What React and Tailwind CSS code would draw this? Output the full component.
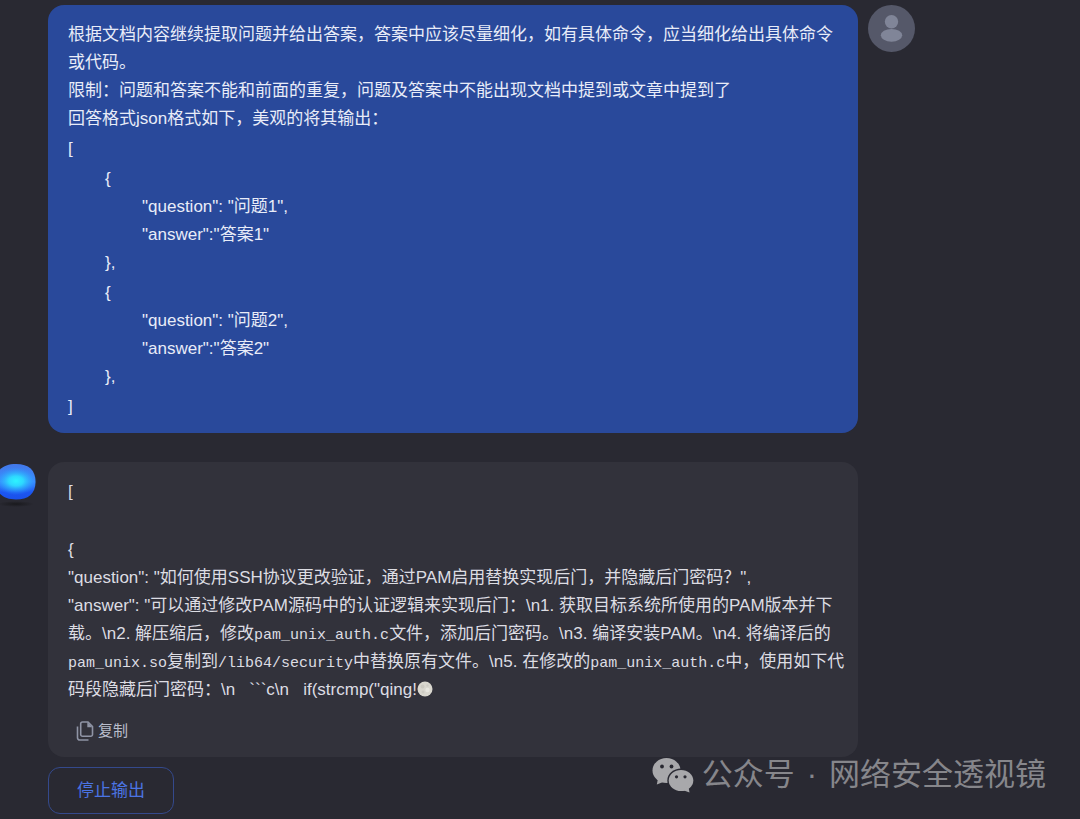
import React from 'react';

const Avatar = () => (
  <svg className="w-[47px] h-[47px] shrink-0" viewBox="0 0 47 47" role="img" aria-label="用户">
    <circle cx="23.5" cy="23.5" r="23.5" fill="#555869" />
    <circle cx="23.5" cy="16.8" r="6.7" fill="#808598" />
    <ellipse cx="23.5" cy="30.3" rx="10.7" ry="6.4" fill="#808598" />
  </svg>
);

const Bot = () => (
  <svg className="w-12 h-12 shrink-0" viewBox="0 0 48 48" role="img" aria-label="助手">
    <defs>
      <linearGradient id="body" x1="0" y1="0" x2="0" y2="1">
        <stop offset="0" stopColor="#4277e8" />
        <stop offset="0.5" stopColor="#3b8cff" />
        <stop offset="0.8" stopColor="#1c56f0" />
        <stop offset="1" stopColor="#1a50ea" />
      </linearGradient>
      <radialGradient id="glow" cx="0.5" cy="0.5" r="0.5">
        <stop offset="0" stopColor="#2df4ff" />
        <stop offset="0.35" stopColor="#2ce0ff" stopOpacity="0.9" />
        <stop offset="0.7" stopColor="#2cb0ff" stopOpacity="0.5" />
        <stop offset="1" stopColor="#2d8cff" stopOpacity="0" />
      </radialGradient>
      <radialGradient id="shade" cx="0.5" cy="0.5" r="0.5">
        <stop offset="0" stopColor="#19191d" />
        <stop offset="1" stopColor="#19191d" stopOpacity="0" />
      </radialGradient>
    </defs>
    <ellipse cx="16" cy="42" rx="18" ry="3" fill="url(#shade)" />
    <path
      d="M16 2C29 2 35.5 8 35.5 20S28 37.5 16 37.5-4 32-4 20 3 2 16 2Z"
      fill="url(#body)"
    />
    <ellipse cx="16" cy="19" rx="21" ry="14" fill="url(#glow)" />
  </svg>
);

const Moon = () => (
  <svg className="inline-block w-4 h-4 align-[-2px]" viewBox="0 0 16 16" aria-hidden="true">
    <circle cx="8" cy="8" r="7.5" fill="#d9d7cf" />
    <circle cx="5.5" cy="5.5" r="2" fill="#cbc9c1" />
    <circle cx="10.5" cy="9" r="2.2" fill="#e8e7e0" />
    <circle cx="6" cy="11" r="1.5" fill="#cdcbc3" />
    <circle cx="10.5" cy="4.5" r="1.2" fill="#cdcbc4" />
  </svg>
);

const CopyIcon = () => (
  <svg className="w-5 h-5" viewBox="0 0 20 20" fill="none" stroke="#8f94a5" strokeWidth="1.6" aria-hidden="true">
    <path d="M6.5 1H12l4.5 4.5V13.5a1.8 1.8 0 0 1-1.8 1.8H6.5a1.8 1.8 0 0 1-1.8-1.8V2.8A1.8 1.8 0 0 1 6.5 1Z" />
    <path d="M11.3 1v5.2h5.2Z" fill="#8f94a5" stroke="none" />
    <path d="M1.5 5.5V16.8a2.2 2.2 0 0 0 2.2 2.2H12.5" />
  </svg>
);

const WechatIcon = () => (
  <svg className="w-[42px] h-9 shrink-0" viewBox="0 0 42 36" aria-hidden="true">
    <g fill="#a8a8ab">
      <ellipse cx="14.5" cy="13.5" rx="14" ry="12.5" />
      <path d="M6 21.500 4.800 27.500 12.500 24.500Z" />
    </g>
    <ellipse cx="29" cy="23.500" rx="13.700" ry="12" fill="#292932" />
    <g fill="#a8a8ab">
      <ellipse cx="29" cy="23.500" rx="12.300" ry="10.600" />
      <path d="M30.500 33 37.500 35.500 36.500 30Z" />
    </g>
    <g fill="#292932">
      <circle cx="10" cy="9.500" r="1.900" />
      <circle cx="19.500" cy="9.500" r="1.900" />
      <circle cx="24.500" cy="19.800" r="1.600" />
      <circle cx="33" cy="19.800" r="1.600" />
    </g>
  </svg>
);

const Code = ({ children }) => (
  <code className="font-['Liberation_Mono',monospace] text-[15px] leading-none">{children}</code>
);

const Item = ({ n }) => (
  <div className="pl-[37px]">
    <p>{'{'}</p>
    <p className="pl-[37px]">"question": "问题{n}",</p>
    <p className="pl-[37px]">"answer":"答案{n}"</p>
    <p>{'},'}</p>
  </div>
);

export default () => {
  return (
    <div className="relative min-h-screen overflow-hidden bg-[#292932] font-['Liberation_Sans','Noto_Sans_CJK_SC',sans-serif] text-[17px] leading-7">
      <main className="w-full max-w-[915px] pt-[5px]">
        <div className="flex items-start pl-12">
          <div className="flex flex-col flex-1 gap-0.5 pt-4 pb-3 pl-5 pr-3 mr-2.5 rounded-2xl bg-[#29499b] text-[#e8ecf8]">
            <div>
              <p>根据文档内容继续提取问题并给出答案，答案中应该尽量细化，如有具体命令，应当细化给出具体命令或代码。</p>
              <p>限制：问题和答案不能和前面的重复，问题及答案中不能出现文档中提到或文章中提到了</p>
              <p>回答格式json格式如下，美观的将其输出：</p>
            </div>
            <p>[</p>
            <Item n={1} />
            <Item n={2} />
            <p>]</p>
          </div>
          <Avatar />
        </div>

        <div className="flex items-start pr-[57px] mt-[29px]">
          <Bot />
          <div className="flex-1 pt-4 pb-3 pl-5 pr-1 rounded-2xl bg-[#32323b] text-[#dddde3]">
            <p>[</p>
            <p className="mt-[30px]">{'{'}</p>
            <p>"question": "如何使用SSH协议更改验证，通过PAM启用替换实现后门，并隐藏后门密码？",</p>
            <p className="whitespace-pre-wrap">
              "answer": "可以通过修改PAM源码中的认证逻辑来实现后门：\n1. 获取目标系统所使用的PAM版本并下
              <br />
              载。\n2. 解压缩后，修改<Code>pam_unix_auth.c</Code>文件，添加后门密码。\n3. 编译安装PAM。\n4. 将编译后的
              <br />
              <Code>pam_unix.so</Code>复制到<Code>/lib64/security</Code>中替换原有文件。\n5. 在修改的<Code>pam_unix_auth.c</Code>中，使用如下代
              <br />
              码段隐藏后门密码：\n{'   '}```c\n{'   '}if(strcmp("qing!<Moon />
            </p>
            <button type="button" className="flex items-center gap-0.5 mt-[13px] ml-2 text-[15px] text-[#b9bdcb] cursor-pointer">
              <CopyIcon />
              复制
            </button>
          </div>
        </div>

        <button
          type="button"
          className="block px-7 pt-[9px] pb-2 mt-2.5 ml-12 border rounded-xl border-[#34498c] text-[#4b74e3] cursor-pointer"
        >
          停止输出
        </button>
      </main>

      <div className="absolute flex items-center gap-2 text-[31px] leading-10 text-[#86868b] right-[34px] bottom-6">
        <WechatIcon />
        <p className="flex gap-3">
          <span>公众号</span>
          <span>·</span>
          <span>网络安全透视镜</span>
        </p>
      </div>
    </div>
  );
};
